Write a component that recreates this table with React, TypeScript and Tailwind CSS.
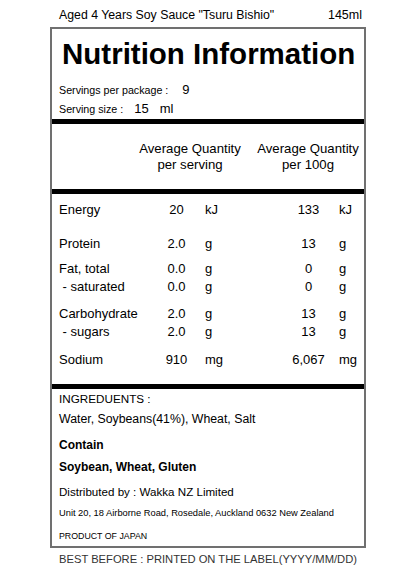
import React from "react";

type Row = { name: string; v1: string; u1: string; v2: string; u2: string };

const groups: Row[][] = [
  [{ name: "Energy", v1: "20", u1: "kJ", v2: "133", u2: "kJ" }],
  [{ name: "Protein", v1: "2.0", u1: "g", v2: "13", u2: "g" }],
  [
    { name: "Fat, total", v1: "0.0", u1: "g", v2: "0", u2: "g" },
    { name: "\u00a0- saturated", v1: "0.0", u1: "g", v2: "0", u2: "g" },
  ],
  [
    { name: "Carbohydrate", v1: "2.0", u1: "g", v2: "13", u2: "g" },
    { name: "\u00a0- sugars", v1: "2.0", u1: "g", v2: "13", u2: "g" },
  ],
  [{ name: "Sodium", v1: "910", u1: "mg", v2: "6,067", u2: "mg" }],
];

const groupGap = ["mt-0", "mt-[16px]", "mt-[8px]", "mt-[10px]", "mt-[11px]"];

const NutrientRow = ({ row }: { row: Row }) => (
  <div className="grid grid-cols-[91px_53px_79px_53px_1fr] h-[17.5px] leading-[17.5px] text-[13px]">
    <span className="whitespace-pre">{row.name}</span>
    <span className="text-center">{row.v1}</span>
    <span className="pl-[2px]">{row.u1}</span>
    <span className="text-center">{row.v2}</span>
    <span className="pl-[4px]">{row.u2}</span>
  </div>
);

const Bar = () => <div className="h-[5px] bg-black" />;

export default function App() {
  return (
    <div className="w-[416px] h-[568px] bg-white text-black font-['Liberation_Sans',Arial,sans-serif] overflow-hidden">
      <div className="ml-[50px] w-[316px]">
        {/* product line */}
        <div className="flex justify-between pt-[7px] pl-[9px] pr-[4px] h-[27px] leading-[16px]">
          <span className="text-[12.3px]">Aged 4 Years Soy Sauce "Tsuru Bishio"</span>
          <span className="text-[12.5px]">145ml</span>
        </div>

        {/* label box */}
        <div className="border-2 border-[#707070]">
          <div className="px-[7px] pt-[8px]">
            <h1 className="text-[29.5px] leading-[34px] font-bold whitespace-nowrap ml-[3px]">
              Nutrition Information
            </h1>
            <div className="mt-[9px] h-[19px] leading-[19px] text-[13px]">
              <span className="text-[10.7px]">Servings per package :</span>
              <span className="ml-[14px]">9</span>
            </div>
            <div className="h-[19px] leading-[19px] text-[13px]">
              <span className="text-[10.7px]">Serving size :</span>
              <span className="ml-[11px]">15</span>
              <span className="ml-[11px]">ml</span>
            </div>
          </div>

          <div className="mt-[1px]">
            <Bar />
          </div>

          {/* column headings */}
          <div className="grid grid-cols-[76px_124px_112px] pt-[16.5px] pb-[16.5px] text-[13.2px] leading-[16px] text-center">
            <span />
            <span>
              Average Quantity
              <br />
              per serving
            </span>
            <span>
              Average Quantity
              <br />
              per 100g
            </span>
          </div>

          <Bar />

          {/* nutrient rows */}
          <div className="pl-[7px] pt-[7px] pb-[15px]">
            {groups.map((g, i) => (
              <div key={i} className={groupGap[i]}>
                {g.map((r) => (
                  <NutrientRow key={r.name} row={r} />
                ))}
              </div>
            ))}
          </div>

          <Bar />

          {/* ingredients */}
          <div className="px-[7px] pt-[2px] pb-[3px]">
            <p className="text-[11.7px] leading-[16px]">INGREDUENTS :</p>
            <p className="mt-[4px] text-[12.3px] leading-[16px]">Water, Soybeans(41%), Wheat, Salt</p>
            <p className="mt-[10px] text-[12px] leading-[16px] font-bold">Contain</p>
            <p className="mt-[6px] text-[12px] leading-[16px] font-bold">Soybean, Wheat, Gluten</p>
            <p className="mt-[9px] text-[11.6px] leading-[16px]">Distributed by : Wakka NZ Limited</p>
            <p className="mt-[6px] text-[9.3px] leading-[14px] whitespace-nowrap">
              Unit 20, 18 Airborne Road, Rosedale, Auckland 0632 New Zealand
            </p>
            <p className="mt-[9px] text-[8.8px] leading-[14px]">PRODUCT OF JAPAN</p>
          </div>
        </div>

        <p className="mt-[3px] pl-[9px] text-[11.2px] leading-[16px] text-[#333] whitespace-nowrap">
          BEST BEFORE : PRINTED ON THE LABEL(YYYY/MM/DD)
        </p>
      </div>
    </div>
  );
}
